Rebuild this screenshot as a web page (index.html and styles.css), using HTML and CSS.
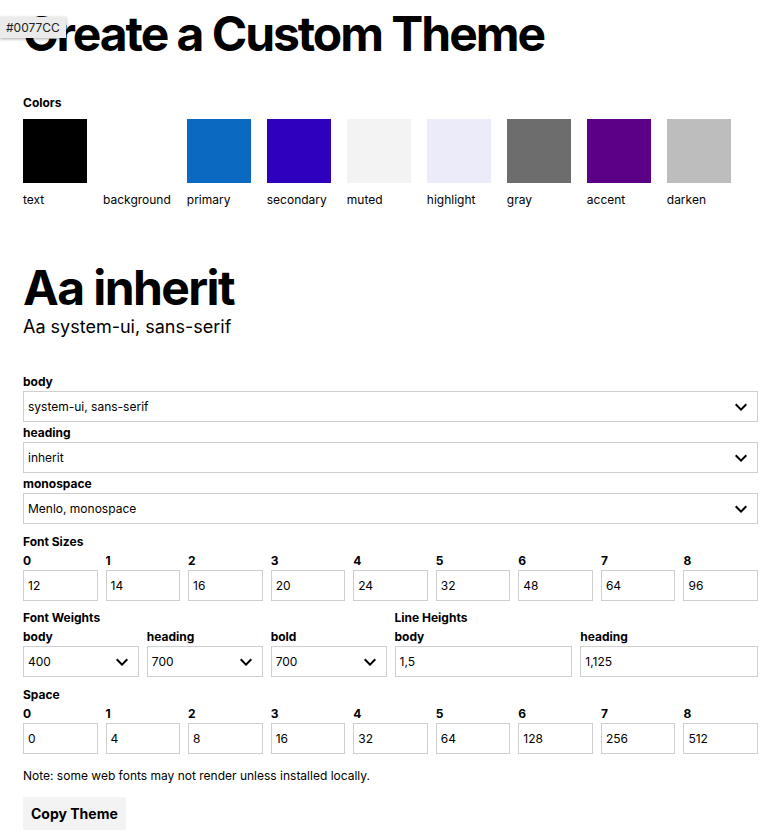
FILE: index.html
```html
<!DOCTYPE html>
<html lang="en">
<head>
<meta charset="utf-8">
<title>Create a Custom Theme</title>
<link rel="stylesheet" href="styles.css">
</head>
<body>
<div class="tooltip">#0077CC</div>
<main class="page">
  <h1 class="title">Create a Custom Theme</h1>

  <section class="colors">
    <div class="label">Colors</div>
    <div class="swatches">
      <div class="swatch"><div class="chip chip-text"></div><div class="chip-name">text</div></div>
      <div class="swatch"><div class="chip chip-background"></div><div class="chip-name">background</div></div>
      <div class="swatch"><div class="chip chip-primary"></div><div class="chip-name">primary</div></div>
      <div class="swatch"><div class="chip chip-secondary"></div><div class="chip-name">secondary</div></div>
      <div class="swatch"><div class="chip chip-muted"></div><div class="chip-name">muted</div></div>
      <div class="swatch"><div class="chip chip-highlight"></div><div class="chip-name">highlight</div></div>
      <div class="swatch"><div class="chip chip-gray"></div><div class="chip-name">gray</div></div>
      <div class="swatch"><div class="chip chip-accent"></div><div class="chip-name">accent</div></div>
      <div class="swatch"><div class="chip chip-darken"></div><div class="chip-name">darken</div></div>
    </div>
  </section>

  <section class="typo">
    <div class="typo-heading">Aa inherit</div>
    <div class="typo-body">Aa system-ui, sans-serif</div>
  </section>

  <section class="fonts">
    <div class="field">
      <div class="label">body</div>
      <div class="select"><span>system-ui, sans-serif</span><svg class="chev" viewBox="0 0 24 24" width="24" height="24"><path d="M7.41 8.59L12 13.17l4.59-4.58L18 10l-6 6-6-6 1.41-1.41z"/></svg></div>
    </div>
    <div class="field">
      <div class="label">heading</div>
      <div class="select"><span>inherit</span><svg class="chev" viewBox="0 0 24 24" width="24" height="24"><path d="M7.41 8.59L12 13.17l4.59-4.58L18 10l-6 6-6-6 1.41-1.41z"/></svg></div>
    </div>
    <div class="field">
      <div class="label">monospace</div>
      <div class="select"><span>Menlo, monospace</span><svg class="chev" viewBox="0 0 24 24" width="24" height="24"><path d="M7.41 8.59L12 13.17l4.59-4.58L18 10l-6 6-6-6 1.41-1.41z"/></svg></div>
    </div>
  </section>

  <section class="group">
    <div class="label">Font Sizes</div>
    <div class="grid9">
      <div class="field"><div class="label">0</div><div class="input">12</div></div>
      <div class="field"><div class="label">1</div><div class="input">14</div></div>
      <div class="field"><div class="label">2</div><div class="input">16</div></div>
      <div class="field"><div class="label">3</div><div class="input">20</div></div>
      <div class="field"><div class="label">4</div><div class="input">24</div></div>
      <div class="field"><div class="label">5</div><div class="input">32</div></div>
      <div class="field"><div class="label">6</div><div class="input">48</div></div>
      <div class="field"><div class="label">7</div><div class="input">64</div></div>
      <div class="field"><div class="label">8</div><div class="input">96</div></div>
    </div>
  </section>

  <section class="group group-tight halves">
    <div class="half">
      <div class="label">Font Weights</div>
      <div class="grid3">
        <div class="field"><div class="label">body</div><div class="select"><span>400</span><svg class="chev" viewBox="0 0 24 24" width="24" height="24"><path d="M7.41 8.59L12 13.17l4.59-4.58L18 10l-6 6-6-6 1.41-1.41z"/></svg></div></div>
        <div class="field"><div class="label">heading</div><div class="select"><span>700</span><svg class="chev" viewBox="0 0 24 24" width="24" height="24"><path d="M7.41 8.59L12 13.17l4.59-4.58L18 10l-6 6-6-6 1.41-1.41z"/></svg></div></div>
        <div class="field"><div class="label">bold</div><div class="select"><span>700</span><svg class="chev" viewBox="0 0 24 24" width="24" height="24"><path d="M7.41 8.59L12 13.17l4.59-4.58L18 10l-6 6-6-6 1.41-1.41z"/></svg></div></div>
      </div>
    </div>
    <div class="half">
      <div class="label">Line Heights</div>
      <div class="grid2">
        <div class="field"><div class="label">body</div><div class="input">1,5</div></div>
        <div class="field"><div class="label">heading</div><div class="input">1,125</div></div>
      </div>
    </div>
  </section>

  <section class="group">
    <div class="label">Space</div>
    <div class="grid9">
      <div class="field"><div class="label">0</div><div class="input">0</div></div>
      <div class="field"><div class="label">1</div><div class="input">4</div></div>
      <div class="field"><div class="label">2</div><div class="input">8</div></div>
      <div class="field"><div class="label">3</div><div class="input">16</div></div>
      <div class="field"><div class="label">4</div><div class="input">32</div></div>
      <div class="field"><div class="label">5</div><div class="input">64</div></div>
      <div class="field"><div class="label">6</div><div class="input">128</div></div>
      <div class="field"><div class="label">7</div><div class="input">256</div></div>
      <div class="field"><div class="label">8</div><div class="input">512</div></div>
    </div>
  </section>

  <p class="note">Note: some web fonts may not render unless installed locally.</p>

  <div class="actions"><button class="copy" type="button">Copy Theme</button></div>
</main>
</body>
</html>
```

FILE: styles.css
```css
* { box-sizing: border-box; }

html, body {
  margin: 0;
  padding: 0;
  background: #fff;
  color: #000;
  font-family: Inter, "Noto Sans", sans-serif;
  font-size: 12px;
  line-height: 1.5;
}

.page {
  padding: 0 21px 24px 23px;
}

.tooltip {
  position: absolute;
  left: 0;
  top: 17px;
  height: 21px;
  padding: 0 6px;
  background: #ebebeb;
  color: #222;
  font-size: 12px;
  line-height: 21px;
  box-shadow: 0 1px 3px rgba(0, 0, 0, 0.35);
  z-index: 2;
}

.title {
  margin: 7px 0 32px;
  font-size: 48px;
  line-height: 1.125;
  font-weight: 700;
  letter-spacing: -2.05px;
}

.label {
  font-weight: 700;
  font-size: 12px;
  line-height: 19px;
}

.colors > .label {
  margin-bottom: 7px;
}

.swatches {
  display: flex;
  gap: 16px;
}

.swatch {
  display: flex;
  flex-direction: column;
  min-width: 64px;
}

.chip {
  width: 64px;
  height: 64px;
}

.chip-name {
  margin-top: 8px;
  font-size: 12px;
  line-height: 18px;
}

.chip-text { background: #000; }
.chip-background { background: #fff; }
.chip-primary { background: #0b69c2; }
.chip-secondary { background: #3000bf; }
.chip-muted { background: #f3f3f3; }
.chip-highlight { background: #ecebfa; }
.chip-gray { background: #6d6d6d; }
.chip-accent { background: #5c0088; }
.chip-darken { background: #bdbdbd; }

.typo {
  margin-top: 52px;
}

.typo-heading {
  font-size: 48px;
  font-weight: 700;
  line-height: 1.125;
  letter-spacing: -1.6px;
}

.typo-body {
  font-size: 18px;
  line-height: 24px;
  letter-spacing: 0;
}

.fonts {
  margin-top: 33px;
}

.fonts .field + .field {
  margin-top: 1px;
}

.select,
.input {
  position: relative;
  display: flex;
  align-items: center;
  height: 31px;
  padding: 0 4px;
  border: 1px solid #cfcfcf;
  background: #fff;
  font-size: 12px;
}

.select span {
  flex: 1;
}

.chev {
  position: absolute;
  right: 4px;
  top: 3px;
  fill: #000;
}

.group {
  margin-top: 8px;
}

.group-tight {
  margin-top: 7px;
}

.grid9 {
  display: grid;
  grid-template-columns: repeat(9, 1fr);
  gap: 8px;
}

.halves {
  display: grid;
  grid-template-columns: 1fr 1fr;
  gap: 8px;
}

.grid3 {
  display: grid;
  grid-template-columns: repeat(3, 1fr);
  gap: 8px;
}

.grid2 {
  display: grid;
  grid-template-columns: repeat(2, 1fr);
  gap: 8px;
}

.note {
  margin: 12px 0 12px;
  font-size: 12px;
  line-height: 19px;
}

.actions {
  display: flex;
}

.copy {
  height: 33px;
  padding: 0 8px;
  border: 0;
  border-radius: 2px;
  background: #f3f3f3;
  color: #000;
  font-family: Inter, "Noto Sans", sans-serif;
  font-size: 14px;
  font-weight: 700;
  line-height: 33px;
}
```
